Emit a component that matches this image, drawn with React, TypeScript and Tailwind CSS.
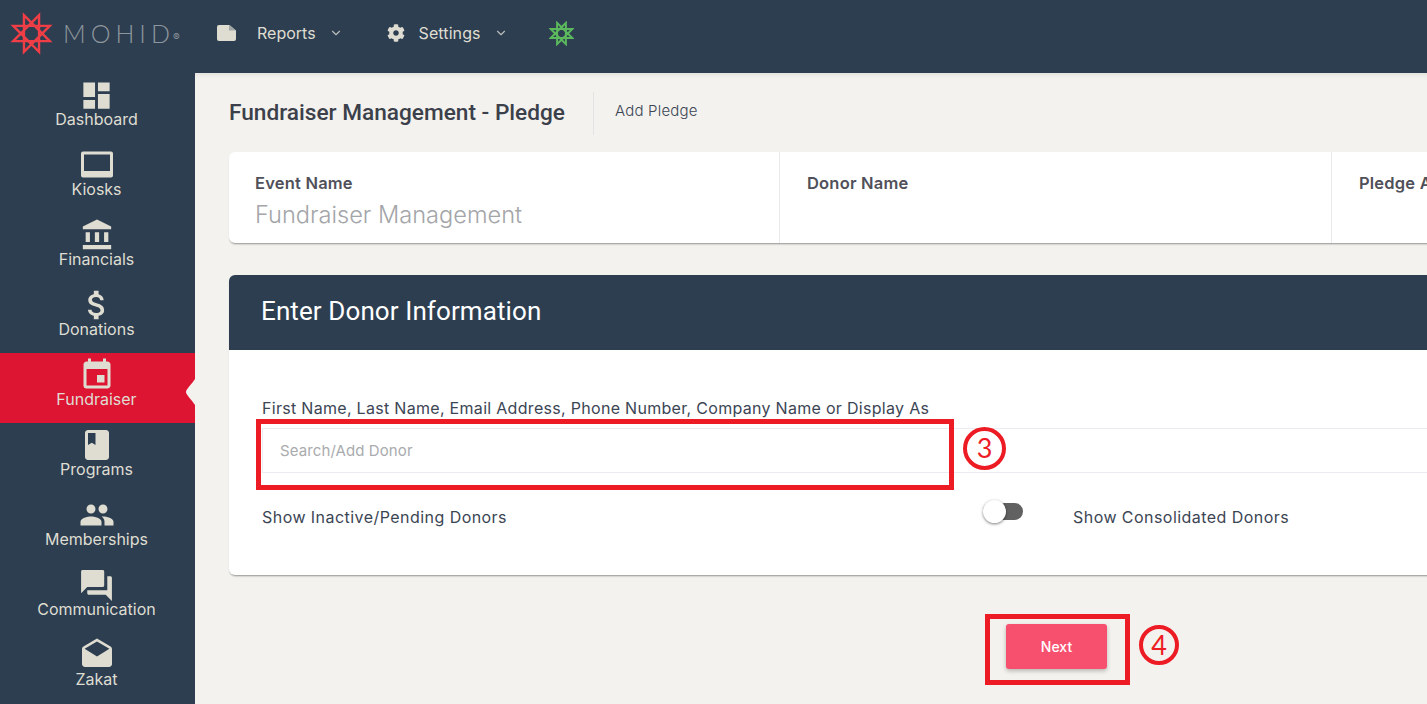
import type { ReactNode } from 'react';
import { FaCog } from 'react-icons/fa';
import { FiChevronDown } from 'react-icons/fi';
import {
  MdAccountBalance,
  MdAttachMoney,
  MdBook,
  MdDashboard,
  MdDrafts,
  MdEvent,
  MdForum,
  MdPeople,
} from 'react-icons/md';

function Star({ size, color, stroke }: { size: number; color: string; stroke: number }) {
  const pts = [0, 3, 6, 1, 4, 7, 2, 5].map((k) => {
    const a = ((22.5 + 45 * k) * Math.PI) / 180;
    return `${50 + 46 * Math.cos(a)},${50 + 46 * Math.sin(a)}`;
  });
  return (
    <svg width={size} height={size} viewBox="0 0 100 100" fill="none">
      <polygon points={pts.join(' ')} stroke={color} strokeWidth={stroke} strokeLinejoin="miter" />
    </svg>
  );
}

function KioskIcon() {
  return (
    <svg width="36" height="36" viewBox="0 0 36 36" fill="#dfddd2">
      <path
        fillRule="evenodd"
        d="M4 4.5h28a2 2 0 0 1 2 2v22a2 2 0 0 1-2 2H4a2 2 0 0 1-2-2v-22a2 2 0 0 1 2-2zM5 7.5v16.5h26V7.5z"
      />
    </svg>
  );
}

function NoteIcon() {
  return (
    <svg width="20" height="16" viewBox="0 0 20 16" fill="#dfddd2">
      <path d="M2 0h10.5L19 5.5V14a2 2 0 0 1-2 2H2a2 2 0 0 1-2-2V2a2 2 0 0 1 2-2z" />
      <path d="M12 0v5.5h6.5" fill="#2d3e50" opacity="0.35" />
    </svg>
  );
}

const NAV: { label: string; icon: ReactNode; active?: boolean }[] = [
  { label: 'Dashboard', icon: <MdDashboard size={35} /> },
  { label: 'Kiosks', icon: <KioskIcon /> },
  { label: 'Financials', icon: <MdAccountBalance size={34} /> },
  { label: 'Donations', icon: <MdAttachMoney size={38} /> },
  { label: 'Fundraiser', icon: <MdEvent size={36} />, active: true },
  { label: 'Programs', icon: <MdBook size={36} /> },
  { label: 'Memberships', icon: <MdPeople size={36} /> },
  { label: 'Communication', icon: <MdForum size={37} /> },
  { label: 'Zakat', icon: <MdDrafts size={36} /> },
];

function SideItem({ label, icon, active }: { label: string; icon: ReactNode; active?: boolean }) {
  return (
    <div
      className={`relative flex h-[70px] flex-col items-center pr-[2px] pt-1 text-[#dfddd2] ${active ? 'bg-[#de1433]' : ''}`}
    >
      <div className="flex h-9 items-center justify-center">{icon}</div>
      <span className="-mt-1 text-[16px] leading-5">{label}</span>
      {active && (
        <svg className="absolute right-0 top-[26px]" width="10" height="26" viewBox="0 0 10 26" fill="#f3f2ee">
          <path d="M10 0v26C7 21 1 16 1 13S7 5 10 0z" />
        </svg>
      )}
    </div>
  );
}

function InfoCell({ label, value, border }: { label: string; value?: string; border?: boolean }) {
  return (
    <div className={`h-full w-[552px] shrink-0 pl-[27px] pt-[21px] first:w-[551px] first:pl-[26px] ${border ? 'border-r border-[#e9e9ec]' : ''}`}>
      <div className="text-[16.5px] font-semibold leading-5 tracking-[0.2px] text-[#50505a]">{label}</div>
      {value && <div className="mt-[6px] text-[23.6px] font-light leading-8 text-[#a3a5a8]">{value}</div>}
    </div>
  );
}

export default function App() {
  return (
    <div
      className="relative flex h-[704px] w-[1427px] flex-col overflow-hidden bg-[#f3f2ee]"
      style={{ fontFamily: 'Inter, "Noto Sans", sans-serif' }}
    >
      {/* top bar */}
      <header className="flex h-[73px] shrink-0 items-center bg-[#2d3e50] pb-[7px] text-[#dfddd2]">
        <div className="ml-[10px] flex w-[199px] items-center">
          <Star size={43} color="#ef3e46" stroke={5.5} />
          <span className="ml-[10px] text-[25px] font-light leading-none tracking-[5px] text-[#8e969d]" style={{ fontFamily: 'Lato, sans-serif' }}>
            MOHID
          </span>
          <span className="-ml-[2px] mt-2 text-[10px] text-[#8e969d]">®</span>
        </div>
        <div className="ml-[8px] flex items-center">
          <NoteIcon />
          <span className="ml-[20px] text-[16px]">Reports</span>
          <FiChevronDown className="ml-[13px] text-[#b9bbb6]" size={14} />
        </div>
        <div className="ml-[44px] flex items-center">
          <FaCog size={18} />
          <span className="ml-[14px] text-[16px] tracking-[0.1px]">Settings</span>
          <FiChevronDown className="ml-[13px] text-[#b9bbb6]" size={14} />
        </div>
        <div className="ml-[41px]">
          <Star size={25} color="#5cb85c" stroke={8} />
        </div>
      </header>

      <div className="flex min-h-0 flex-1">
        <aside className="w-[195px] shrink-0 bg-[#2d3e50]">
          {NAV.map((n) => (
            <SideItem key={n.label} label={n.label} icon={n.icon} active={n.active} />
          ))}
        </aside>

        <main className="min-w-0 flex-1 pl-[34px] shadow-[inset_0_6px_6px_-6px_rgba(0,0,0,0.12)]">
          <div className="flex h-[79px] items-center pt-[1px]">
            <h1 className="text-[22.65px] font-medium text-[#3b404a]" style={{ fontFamily: 'Roboto, sans-serif' }}>
              Fundraiser Management - Pledge
            </h1>
            <div className="ml-7 flex h-[43px] items-center border-l border-[#e3e2e4] pb-[3px] pl-[21px] text-[15px] font-light tracking-[0.2px] text-[#3b4554]">
              Add Pledge
            </div>
          </div>

          <div className="flex h-[91px] w-[1300px] overflow-hidden rounded-l-md bg-white shadow-[0_2px_2px_-1px_rgba(0,0,0,0.4)]">
            <InfoCell label="Event Name" value="Fundraiser Management" border />
            <InfoCell label="Donor Name" border />
            <InfoCell label="Pledge Amount" />
          </div>

          <section className="mt-8 h-[300px] w-[1300px] overflow-hidden rounded-l-md bg-white shadow-[0_2px_2px_-1px_rgba(0,0,0,0.4)]">
            <div className="flex h-[75px] items-center bg-[#2d3e50] pb-[2px] pl-8 text-[26px] tracking-[0.1px] text-white" style={{ fontFamily: 'Roboto, sans-serif' }}>
              Enter Donor Information
            </div>
            <div className="pl-[33px] text-[16px] text-[#3b4554]">
              <div className="mt-[48px] leading-5 tracking-[0.3px]">
                First Name, Last Name, Email Address, Phone Number, Company Name or Display As
              </div>
              <div className="mt-[10px] flex h-[45px] items-center border border-r-0 border-[#ebebf3] pl-[17px] pt-[2px] text-[15px] tracking-[0.1px] text-[#a9abae]">
                Search/Add Donor
              </div>
              <div className="mt-[34px] flex h-5 items-center tracking-[0.45px]">
                <span className="w-[732px]">Show Inactive/Pending Donors</span>
                <div className="relative -mt-3 h-[17px] w-[29px] rounded-full bg-[#616161]">
                  <div className="absolute -left-[11px] -top-[3px] h-[23px] w-[23px] rounded-full bg-white shadow-[0_1px_3px_rgba(0,0,0,0.5)]" />
                </div>
                <span className="ml-[50px]">Show Consolidated Donors</span>
              </div>
            </div>
          </section>

          <div className="ml-[777px] mt-[49px] flex h-[45px] w-[101px] items-center justify-center rounded-[3px] bg-[#f7506f] text-[14px] font-medium text-white shadow-[0_2px_4px_rgba(0,0,0,0.25)]">
            Next
          </div>
        </main>
      </div>

      {/* tutorial annotations drawn over the screenshot */}
      <div className="absolute left-[256px] top-[419px] h-[71px] w-[698px] border-[5px] border-[#ed1c24]" />
      <div className="absolute left-[963px] top-[427px] flex h-[43px] w-[43px] items-center justify-center rounded-full border-[4px] border-[#ed1c24] text-[27px] text-[#ed1c24]" style={{ fontFamily: 'Lato, sans-serif' }}>
        3
      </div>
      <div className="absolute left-[985px] top-[614px] h-[71px] w-[145px] border-[5px] border-[#ed1c24]" />
      <div className="absolute left-[1139px] top-[625px] flex h-[40px] w-[40px] items-center justify-center rounded-full border-[4px] border-[#ed1c24] text-[27px] text-[#ed1c24]" style={{ fontFamily: 'Lato, sans-serif' }}>
        4
      </div>
    </div>
  );
}
